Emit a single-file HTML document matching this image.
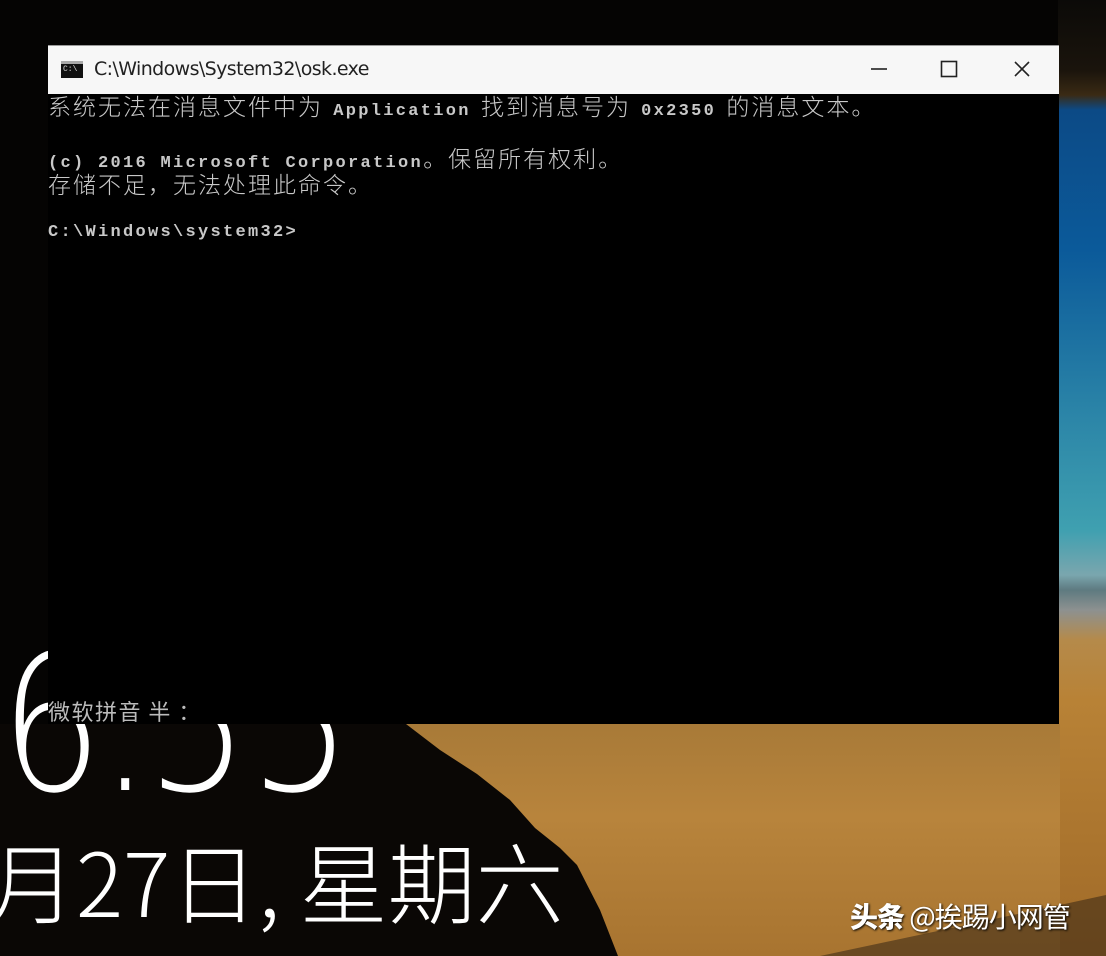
<!DOCTYPE html>
<html><head><meta charset="utf-8">
<style>
html,body{margin:0;padding:0}
body{width:1106px;height:956px;position:relative;overflow:hidden;background:#050403;font-family:"Liberation Sans","Noto Sans CJK SC",sans-serif}
.sky{position:absolute;left:1058px;top:0;width:48px;height:956px;background:linear-gradient(#0b0a08 0,#1a140c 70px,#3a2a14 95px,#0c4a86 110px,#0b5a9a 250px,#2c86a8 420px,#3fa0b0 530px,#7aa6ae 575px,#5e7a80 590px,#8d9190 610px,#b58a4a 640px,#b88236 700px,#a06a28 956px)}
.sand{position:absolute;left:300px;top:724px;width:760px;height:232px;background:linear-gradient(#a87a38,#b8843c 40%,#a87430 100%)}
svg.rock{position:absolute;left:0;top:0}
.d{position:absolute;top:630px;font-size:190px;color:#fff;line-height:1;font-family:"DejaVu Sans","Liberation Sans",sans-serif;font-weight:200;transform:scaleX(0.85);transform-origin:left}
.date{position:absolute;left:-12px;top:836px;font-size:88px;color:#fff;line-height:1;font-family:"Noto Sans CJK SC",sans-serif;font-weight:300;white-space:nowrap}
.win{position:absolute;left:48px;top:45px;width:1011px;height:679px;background:#000}
.title{position:absolute;left:0;top:0;width:1011px;height:48px;background:#f7f7f7;border-top:1px solid #9a9a9a}
.title .t{position:absolute;left:46px;top:12px;font-size:19px;color:#222;font-family:"DejaVu Sans","Liberation Sans",sans-serif;letter-spacing:-0.6px}
.ico{position:absolute;left:13px;top:15px;width:22px;height:17px;background:#111;border-top:3px solid #aaa;box-sizing:border-box}
.ico span{position:absolute;left:2px;top:1px;font-size:8px;color:#ddd;font-family:"Liberation Mono",monospace}
.ln{position:absolute;left:0;height:26px;line-height:26px;color:#c8c8c8;font-size:17px;white-space:pre;font-family:"Liberation Mono",monospace}
.ln .c{font-family:"Noto Sans CJK SC",sans-serif;font-weight:300;font-size:23px;letter-spacing:2px;line-height:26px}
.ln b{font-weight:bold;font-size:17px;letter-spacing:2.3px;line-height:26px}
.ime{position:absolute;left:0;top:650px;color:#bbb;font-size:22px;letter-spacing:1.5px;font-family:"Noto Sans CJK SC",sans-serif;white-space:pre}
.wm{position:absolute;left:850px;top:896px;color:#fff;font-size:28px;font-family:"Noto Sans CJK SC",sans-serif;text-shadow:1px 1px 2px #000;letter-spacing:-1px;white-space:nowrap}
.wm b{font-weight:900}
</style></head><body>
<div class="sky"></div>
<div class="sand"></div>
<svg class="rock" width="1106" height="956"><path d="M0 724 L406 724 L440 750 L477 774 L510 800 L535 828 L560 848 L577 865 L600 910 L618 956 L0 956 Z" fill="#0a0705"/><path d="M820 956 L1060 905 L1106 895 L1106 956 Z" fill="#2a1e12" opacity="0.5"/></svg>
<div class="d" style="left:0">6</div>
<div class="d" style="left:98px">:</div>
<div class="d" style="left:146px">5</div>
<div class="d" style="left:249px">5</div>
<div class="date">月27日, 星期六</div>
<div class="win">
 <div class="title">
  <div class="ico"><span>C:\</span></div>
  <div class="t">C:\Windows\System32\osk.exe</div>
  <svg style="position:absolute;left:0;top:0" width="1011" height="48"><line x1="823" y1="23" x2="839" y2="23" stroke="#222" stroke-width="1.6"/><rect x="893.5" y="15.5" width="15" height="15" fill="none" stroke="#222" stroke-width="1.6"/><path d="M967 16 L981 30 M981 16 L967 30" stroke="#222" stroke-width="1.6"/></svg>
 </div>
 <div class="ln" style="top:47px"><span class="c">系统无法在消息文件中为</span> <b>Application</b> <span class="c">找到消息号为</span> <b>0x2350</b> <span class="c">的消息文本。</span></div>
 <div class="ln" style="top:99px"><b>(c) 2016 Microsoft Corporation</b><span class="c">。保留所有权利。</span></div>
 <div class="ln" style="top:125px"><span class="c">存储不足，无法处理此命令。</span></div>
 <div class="ln" style="top:175px"><b>C:\Windows\system32&gt;</b></div>
 <div class="ime">微软拼音 半 ：</div>
</div>
<div class="wm"><b>头条</b> @挨踢小网管</div>
</body></html>
